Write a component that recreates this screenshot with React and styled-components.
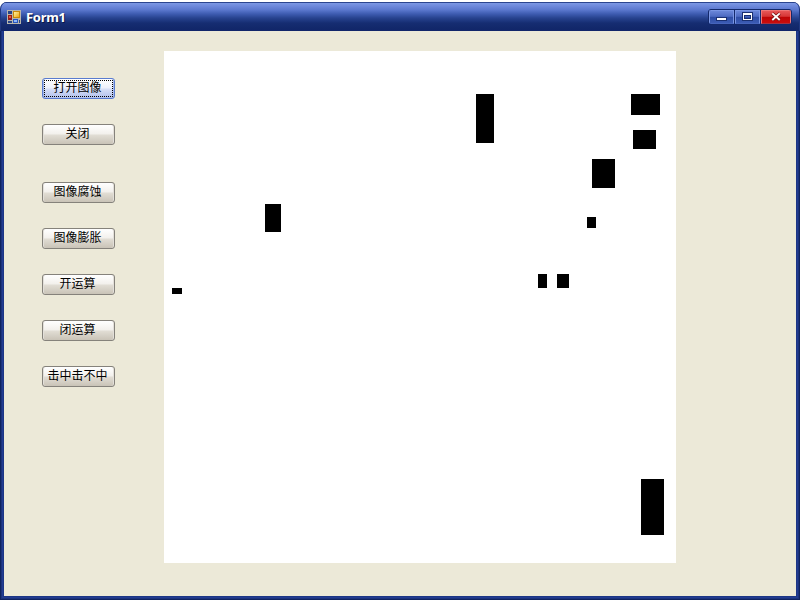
import React from "react";
import styled, { createGlobalStyle } from "styled-components";

const GlobalStyle = createGlobalStyle`
  body { margin: 0; background: #fff; overflow: hidden; }
  * { box-sizing: border-box; }
`;

const Desktop = styled.div`
  width: 800px;
  height: 600px;
  padding-top: 2px;
  background: #fff;
`;

const Window = styled.div`
  display: flex;
  flex-direction: column;
  height: 598px;
  border-radius: 7px 7px 0 0;
  overflow: hidden;
  background: #1c347e;
`;

const TitleBar = styled.header`
  position: relative;
  z-index: 1;
  display: flex;
  align-items: center;
  flex: 0 0 29px;
  padding: 0 8px 0 7px;
  border-radius: 7px 7px 0 0;
  background: linear-gradient(
    #2b4590 0, #2b4590 1px, #7c98e4 1px, #6e89dc 4px, #5a77cd 8px,
    #3d5bb0 12px, #27438f 16px, #162d72 21px, #12286a 26px, #11256a 29px
  );
  box-shadow: inset 1px 0 #20377f, inset -1px 0 #20377f;
`;

const AppIcon = styled.svg`
  display: block;
  width: 14px;
  height: 14px;
`;

const Title = styled.h1`
  flex: 1;
  margin: 0 0 0 5px;
  color: #fff;
  font: bold 13px/16px "Noto Sans", "DejaVu Sans", sans-serif;
  letter-spacing: -0.3px;
  text-shadow: 1px 1px #0a1848;
`;

const Controls = styled.div`
  display: flex;
  width: 84px;
  height: 16px;
  border: 1px solid #14296b;
  border-radius: 3px;
  overflow: hidden;
  background: #14296b;
  gap: 1px;
`;

const ControlButton = styled.button`
  display: block;
  width: ${(p) => (p.$close ? 30 : 25)}px;
  flex: none;
  padding: 0;
  border: 1px solid ${(p) => (p.$close ? "#ee7777" : "#7a96e4")};
  border-bottom-color: ${(p) => (p.$close ? "#a83040" : "#4564bb")};
  background: ${(p) =>
    p.$close
      ? "linear-gradient(#e65757 0, #d63535 45%, #bd0404 50%, #c90d0d 100%)"
      : "linear-gradient(#6a86d8 0, #4d6bc2 45%, #2e4da5 50%, #3b5bb4 100%)"};

  svg { display: block; margin: 0 auto; }
`;

const Client = styled.main`
  display: flex;
  flex: 1;
  margin: 0 4px 4px;
  padding: 20px 0 0 38px;
  background: #ece9d8;
  box-shadow: 0 0 0 1px #1c3685, 0 0 0 2px #213c92, 0 0 0 3px #1b337c, 0 0 0 4px #0f2360;
`;

const Commands = styled.nav`
  display: flex;
  flex-direction: column;
  gap: 25px;
  width: 122px;
  padding-top: 27px;
`;

const CommandButton = styled.button`
  display: flex;
  align-items: center;
  justify-content: center;
  width: 73px;
  height: 21px;
  margin: ${(p) => (p.$group ? 12 : 0)}px 0 0;
  padding: 0 2px 4px 0;
  border: 1px solid ${(p) => (p.$focused ? "#5a7ccf" : "#85827b")};
  border-radius: 3px;
  background: ${(p) =>
    p.$focused
      ? "linear-gradient(#fff 0, #eef1fb 45%, #d5ddf6 55%, #b0bfec 100%)"
      : "linear-gradient(#fff 0, #f3f1ed 45%, #e0dcd3 55%, #c9c3b7 100%)"};
  box-shadow: inset 1px 0 ${(p) => (p.$focused ? "#a5b9ed" : "#e3e0da")},
    inset -1px 0 ${(p) => (p.$focused ? "#a5b9ed" : "#e3e0da")};
  outline: ${(p) => (p.$focused ? "1px dotted #000" : "none")};
  outline-offset: -3px;
  color: #000;
  font: 12px/16px "Noto Sans CJK SC", sans-serif;
  white-space: nowrap;
`;

const Picture = styled.svg`
  display: block;
  flex: none;
  width: 512px;
  height: 512px;
  background: #fff;
`;

const commands = [
  { label: "打开图像", focused: true },
  { label: "关闭" },
  { label: "图像腐蚀", group: true },
  { label: "图像膨胀" },
  { label: "开运算" },
  { label: "闭运算" },
  { label: "击中击不中" },
];

// x, y, width, height of each region in the binary image
const regions = [
  [312, 43, 18, 49],
  [467, 43, 29, 21],
  [469, 79, 23, 19],
  [428, 108, 23, 29],
  [101, 153, 16, 28],
  [423, 166, 9, 11],
  [374, 223, 9, 14],
  [393, 223, 12, 14],
  [8, 237, 10, 6],
  [477, 428, 23, 56],
];

export default function App() {
  return (
    <Desktop>
      <GlobalStyle />
      <Window>
        <TitleBar>
          <AppIcon viewBox="0 0 14 14" shapeRendering="crispEdges">
            <defs>
              <linearGradient id="yellow" x2="1" y2="1">
                <stop stopColor="#fff2a0" />
                <stop offset="1" stopColor="#efa912" />
              </linearGradient>
            </defs>
            <path fill="#b9b6ac" d="M0 0h14v14H0z" />
            <path fill="#294487" d="M1 1h4v3H1zM1 11h4v2H1zM12 10h1v3h-1z" />
            <path fill="#941d18" d="M1 5h4v5H1z" />
            <path fill="#e75443" d="M2 6h2v2H2z" />
            <path fill="#c98808" d="M6 1h7v7H6z" />
            <path fill="url(#yellow)" d="M7 2h5v5H7z" />
            <path fill="#2856bd" d="M6 9h5v4H6z" />
            <path fill="#8bb6ff" d="M7 10h3v2H7z" />
          </AppIcon>
          <Title>Form1</Title>
          <Controls>
            <ControlButton aria-label="Minimize">
              <svg width="23" height="12" shapeRendering="crispEdges">
                <path fill="#1a3071" d="M6 6h11v4H6z" />
                <path fill="#fff" d="M7 7h9v2H7z" />
              </svg>
            </ControlButton>
            <ControlButton aria-label="Maximize">
              <svg width="23" height="12" shapeRendering="crispEdges">
                <path fill="none" stroke="#1a3071" d="M6.5 1.5h10v8h-10zM8.5 4.5h6v3h-6z" />
                <path fill="#fff" fillRule="evenodd" d="M7 2h9v7H7zM8 4v4h7V4z" />
              </svg>
            </ControlButton>
            <ControlButton $close aria-label="Close">
              <svg width="28" height="12">
                <path stroke="#751313" strokeWidth="3.4" d="M10.3 2.4l7.4 6.6M17.7 2.4l-7.4 6.6" />
                <path stroke="#fff" strokeWidth="1.9" d="M10.3 2.4l7.4 6.6M17.7 2.4l-7.4 6.6" />
              </svg>
            </ControlButton>
          </Controls>
        </TitleBar>
        <Client>
          <Commands>
            {commands.map(({ label, focused, group }) => (
              <CommandButton key={label} $focused={focused} $group={group}>
                {label}
              </CommandButton>
            ))}
          </Commands>
          <Picture viewBox="0 0 512 512" shapeRendering="crispEdges">
            {regions.map(([x, y, width, height]) => (
              <rect key={`${x}-${y}`} x={x} y={y} width={width} height={height} />
            ))}
          </Picture>
        </Client>
      </Window>
    </Desktop>
  );
}
